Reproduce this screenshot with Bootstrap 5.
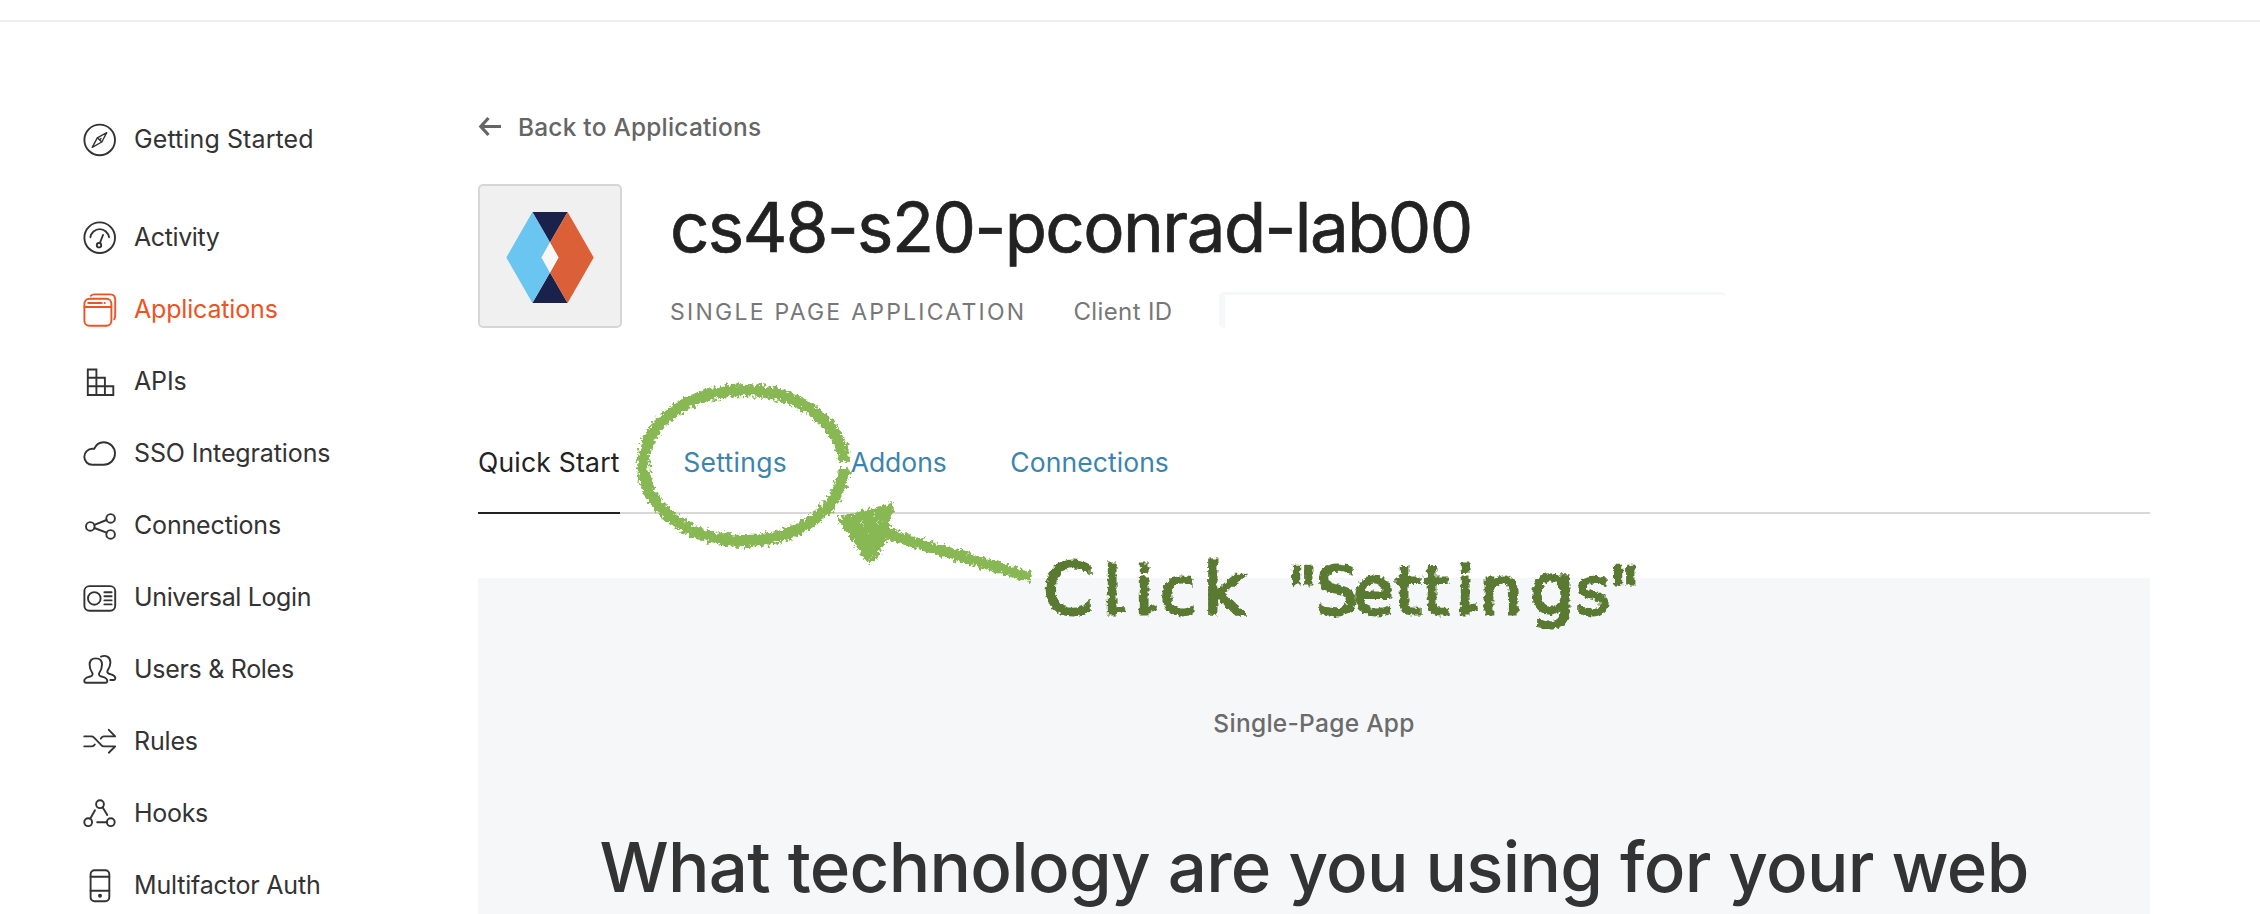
<!DOCTYPE html>
<html lang="en">
<head>
<meta charset="utf-8">
<title>cs48-s20-pconrad-lab00</title>
<meta name="viewport" content="width=device-width, initial-scale=1">
<link href="https://cdn.jsdelivr.net/npm/bootstrap@5.3.0/dist/css/bootstrap.min.css" rel="stylesheet">
<style>
  body { font-family: Inter, "Liberation Sans", sans-serif; color: #333; height: 914px; overflow: hidden; background: #fff; }
  .topbar { height: 22px; border-bottom: 2px solid #eee; }
  .page { height: 892px; }
  .side { width: 478px; padding: 81px 0 0 83px; }
  .side .nav-link { height: 72px; padding: 0; gap: 17px; font-size: 25px; line-height: 72px; color: #333; letter-spacing: -.17px; white-space: nowrap; }
  .side .nav-link.active { color: #eb5424; }
  .side .first { margin-bottom: 26px; }
  .side svg { width: 34px; height: 34px; margin-top: 1px; flex: none; fill: none; stroke: currentColor; stroke-width: 1.9; stroke-linecap: round; stroke-linejoin: round; }
  .content { width: 1672px; padding-top: 87px; }
  .back { font-size: 24.4px; line-height: 36px; font-weight: 500; color: #656565; letter-spacing: .25px; gap: 17px; }
  .app-head { margin-top: 39px; height: 144px; gap: 48px; }
  .app-logo { width: 144px; height: 144px; border: 2px solid #d6d6d6; border-radius: 5px; background: #f0f0f0; }
  .app-title { font-size: 69px; line-height: 80px; font-weight: 400; -webkit-text-stroke: .7px #222; letter-spacing: -1.55px; color: #222; margin: 3px 0 30px; white-space: nowrap; }
  .meta { height: 30px; line-height: 30px; color: #777; white-space: nowrap; }
  .kind { font-size: 23px; letter-spacing: 2.24px; }
  .cid { font-size: 24px; letter-spacing: .38px; margin-left: 47px; }
  .cid-box { width: 507px; height: 36px; margin: -5px 0 0 46px; border-top: 3px solid #f5f7f9; border-left: 6px solid #f5f7f9; border-radius: 5px 5px 0 5px; }
  .app-tabs { margin-top: 114px; gap: 63.6px; border-bottom: 2px solid #d8d8d8; }
  .app-tabs .nav-link { padding: 0 0 30px; margin-bottom: -2px; border: 0; border-bottom: 2px solid transparent; border-radius: 0; font-size: 26.5px; line-height: 40px; color: #3b84ad; letter-spacing: .08px; }
  .app-tabs .nav-link.active { color: #222; border-color: #222; background: none; letter-spacing: .22px; }
  .quick { margin-top: 64px; height: 336px; padding-top: 127px; background: #f5f7f9; }
  .quick p { font-size: 24.5px; line-height: 36px; font-weight: 500; color: #6b6b6b; letter-spacing: .28px; margin: 0 0 86px; }
  .quick h2 { font-size: 69px; line-height: 80px; font-weight: 500; letter-spacing: -.7px; color: #333; margin: 0; white-space: nowrap; }
  .notes { width: 2260px; height: 914px; pointer-events: none; }
  .notes text { font: 66px "DejaVu Sans", sans-serif; }
</style>
</head>
<body>
<header class="topbar"></header>
<div class="page d-flex">
  <nav class="side nav flex-column flex-nowrap flex-shrink-0">
    <a class="nav-link first d-flex align-items-center" style="letter-spacing:.1px" href="#"><svg viewBox="0 0 34 34"><circle cx="16.7" cy="16.9" r="15.3"/><path stroke-width="1.4" d="M23.7 9.7 18.8 19 9.2 24.3 14.3 14.8ZM14.3 14.8l4.5 4.2M16.5 17l1.5-1.5"/></svg>Getting Started</a>
    <a class="nav-link d-flex align-items-center" style="letter-spacing:-.4px" href="#"><svg viewBox="0 0 34 34"><circle cx="16.7" cy="16.7" r="15.3"/><path d="M7.4 16.2A9.4 9.4 0 0 1 26 16.2M20 14l-3.1 8"/><circle cx="16" cy="24.2" r="2.2"/></svg>Activity</a>
    <a class="nav-link active d-flex align-items-center" href="#"><svg viewBox="0 0 34 34"><rect x="1.4" y="5.7" width="27" height="27" rx="5"/><path d="M1.4 14h27M5.2 10h13.6M21.5 10h.3M7.7 2.8Q9 1.4 11.5 1.4H27q5.2 0 5.2 5.2V22q0 3-1 4.3"/></svg>Applications</a>
    <a class="nav-link d-flex align-items-center" href="#"><svg viewBox="0 0 34 34" style="stroke-linejoin:miter"><path d="M4.8 4.5h8.6v8.3h8.5v8.5h8.4V30H4.8ZM4.8 12.8h8.6V30M4.8 21.3h17.1V30"/></svg>APIs</a>
    <a class="nav-link d-flex align-items-center" style="letter-spacing:-.11px" href="#"><svg viewBox="0 0 34 34"><path d="M9.3 27.8A8 8 0 0 1 9.3 11.8H11.2C13 7.6 16.5 5.2 20.7 5.2A11.3 11.3 0 0 1 20.7 27.8Z"/></svg>SSO Integrations</a>
    <a class="nav-link d-flex align-items-center" href="#"><svg viewBox="0 0 34 34"><circle cx="7.3" cy="17.4" r="4.3"/><circle cx="27.6" cy="9.4" r="4.3"/><circle cx="27.6" cy="25.4" r="4.3"/><path d="M11.4 15.8 23.5 11M11.4 19l12.1 4.6"/></svg>Connections</a>
    <a class="nav-link d-flex align-items-center" style="letter-spacing:-.36px" href="#"><svg viewBox="0 0 34 34"><rect x="1.4" y="5.1" width="30.8" height="24.6" rx="5"/><circle cx="11.3" cy="17.4" r="6.3"/><path d="M21.4 11.3h7.2M21.4 15.3h7.2M21.4 19.4h7.2M21.4 23.4h7.2"/></svg>Universal Login</a>
    <a class="nav-link d-flex align-items-center" style="letter-spacing:-.3px" href="#"><svg viewBox="0 0 34 34"><path d="M3 29.7Q1.2 29.7 1.3 27.7C1.6 24.4 5.4 24.4 8.2 23.1 9.8 22.3 9.9 21 9.2 19.8 7.6 17.3 6.6 15.4 6.6 11.7 6.6 7.6 8.6 5.4 12.8 5.4S19 7.6 19 11.7C19 15.4 18 17.3 16.4 19.8 15.7 21 15.8 22.3 17.4 23.1 20.2 24.4 24 24.4 24.3 27.7Q24.4 29.7 22.6 29.7ZM18 3.7C22.4 1.8 27.4 3.5 27.4 9.5 27.4 13.5 25.6 15.6 24.6 17.6 24 19 24.3 20 25.8 20.6 28.5 21.8 32 21.7 32.3 24.8Q32.4 27 30.5 27H27.3"/></svg>Users &amp; Roles</a>
    <a class="nav-link d-flex align-items-center" href="#"><svg viewBox="0 0 34 34"><path d="M1.3 11.4H8.6Q9.8 11.4 10.8 12.4L18.6 20.4Q19.5 21.4 20.8 21.4H32.2L25.8 27.7M25.8 4.8 32.2 11.4H20.6Q19 11.4 17.8 13.6M1.3 21.4H9Q10.5 21.4 11.8 19.5"/></svg>Rules</a>
    <a class="nav-link d-flex align-items-center" style="letter-spacing:-.3px" href="#"><svg viewBox="0 0 34 34"><circle cx="17" cy="7.2" r="3.9"/><circle cx="5.2" cy="25.2" r="3.9"/><circle cx="27.8" cy="25.2" r="3.9"/><path d="M7.2 21.7 12 13.3M19.6 10.2l4.7 7.7M14.2 25.2h9.6"/></svg>Hooks</a>
    <a class="nav-link d-flex align-items-center" style="letter-spacing:-.19px" href="#"><svg viewBox="0 0 34 34"><rect x="7.6" y="1.3" width="18.7" height="31" rx="4"/><path d="M7.6 7.8h18.7M7.6 21.7h18.7"/><circle cx="17" cy="26.8" r="1.3" fill="currentColor" stroke-width="1.4"/></svg>Multifactor Auth</a>
  </nav>

  <main class="content flex-shrink-0">
    <a class="back d-flex align-items-center text-decoration-none" href="#"><svg width="23" height="22" viewBox="0 0 23 22" fill="none" stroke="currentColor" stroke-width="3.2"><path d="M10.5 2 2.8 10.5l7.7 8.5M2.8 10.5H23"/></svg>Back to Applications</a>

    <div class="app-head d-flex">
      <div class="app-logo flex-shrink-0">
        <svg class="d-block" width="140" height="140" viewBox="480 186 140 140">
          <path fill="#1a224c" d="M532.4 212h35.2L550 242.5ZM550 272.5l17.6 30.5h-35.2Z"/>
          <path fill="#6bc5f1" d="M532.4 212 550 242.5 541.5 257.5 550 272.5 532.4 303 506.3 257.5Z"/>
          <path fill="#db5f37" d="M567.6 212 550 242.5 558.5 257.5 550 272.5 567.6 303 593.7 257.5Z"/>
          <path fill="#f7f7f7" d="M550 242.5 558.5 257.5 550 272.5 541.5 257.5Z"/>
        </svg>
      </div>
      <div>
        <h1 class="app-title">cs48-s20-pconrad-lab00</h1>
        <div class="meta d-flex">
          <span class="kind">SINGLE PAGE APPLICATION</span>
          <span class="cid">Client ID</span>
          <div class="cid-box"></div>
        </div>
      </div>
    </div>

    <ul class="app-tabs nav">
      <li><a class="nav-link active" href="#">Quick Start</a></li>
      <li><a class="nav-link" style="letter-spacing:.3px" href="#">Settings</a></li>
      <li><a class="nav-link" style="letter-spacing:-.05px" href="#">Addons</a></li>
      <li><a class="nav-link" href="#">Connections</a></li>
    </ul>

    <section class="quick text-center">
      <p>Single-Page App</p>
      <h2>What technology are you using for your web</h2>
    </section>
  </main>
</div>

<!-- Chalk-style callout over the tabs -->
<svg class="notes position-absolute top-0 start-0" viewBox="0 0 2260 914">
  <defs>
    <filter id="chalk" filterUnits="userSpaceOnUse" x="620" y="370" width="1040" height="290">
      <feTurbulence type="fractalNoise" baseFrequency=".28" numOctaves="3" seed="4" result="n"/>
      <feDisplacementMap in="SourceGraphic" in2="n" scale="10" xChannelSelector="R" yChannelSelector="G"/>
    </filter>
    <filter id="chalkText" filterUnits="userSpaceOnUse" x="1030" y="540" width="620" height="110">
      <feTurbulence type="fractalNoise" baseFrequency=".24" numOctaves="2" seed="9" result="n"/>
      <feDisplacementMap in="SourceGraphic" in2="n" scale="6" xChannelSelector="R" yChannelSelector="G"/>
    </filter>
  </defs>
  <g filter="url(#chalk)" fill="none" stroke="#88b853">
    <path stroke-width="12" d="M844 462A100.5 75.5 0 1 0 844 469"/>
    <path stroke-width="11" d="M884 533 1030 577"/>
    <path fill="#88b853" stroke-width="4" stroke-linejoin="round" d="M840 519 892 505 885 537 873 561 869 561Z"/>
    <path stroke="#fff" stroke-width="1.2" opacity=".8" d="M863 522v4M873 554v3M874 514v2M868 532v2M879 521v3"/>
  </g>
  <g filter="url(#chalkText)">
    <text y="614" fill="#5a7a33" stroke="#5a7a33" stroke-width="2.8" x="1043 1103 1135 1160 1203 1240 1287 1316 1353 1395 1423 1456 1480 1530 1576 1609"><tspan font-size="72">C</tspan>lic<tspan font-size="72">k</tspan> "Settin<tspan font-size="70">g</tspan>s"</text>
    <path fill="none" stroke="#5a7a33" stroke-width="6" d="M1113 611 1125 609M1145 611 1156 607M1462 612 1477 606"/>
  </g>
</svg>
<script src="https://cdn.jsdelivr.net/npm/bootstrap@5.3.0/dist/js/bootstrap.bundle.min.js"></script>
</body>
</html>
